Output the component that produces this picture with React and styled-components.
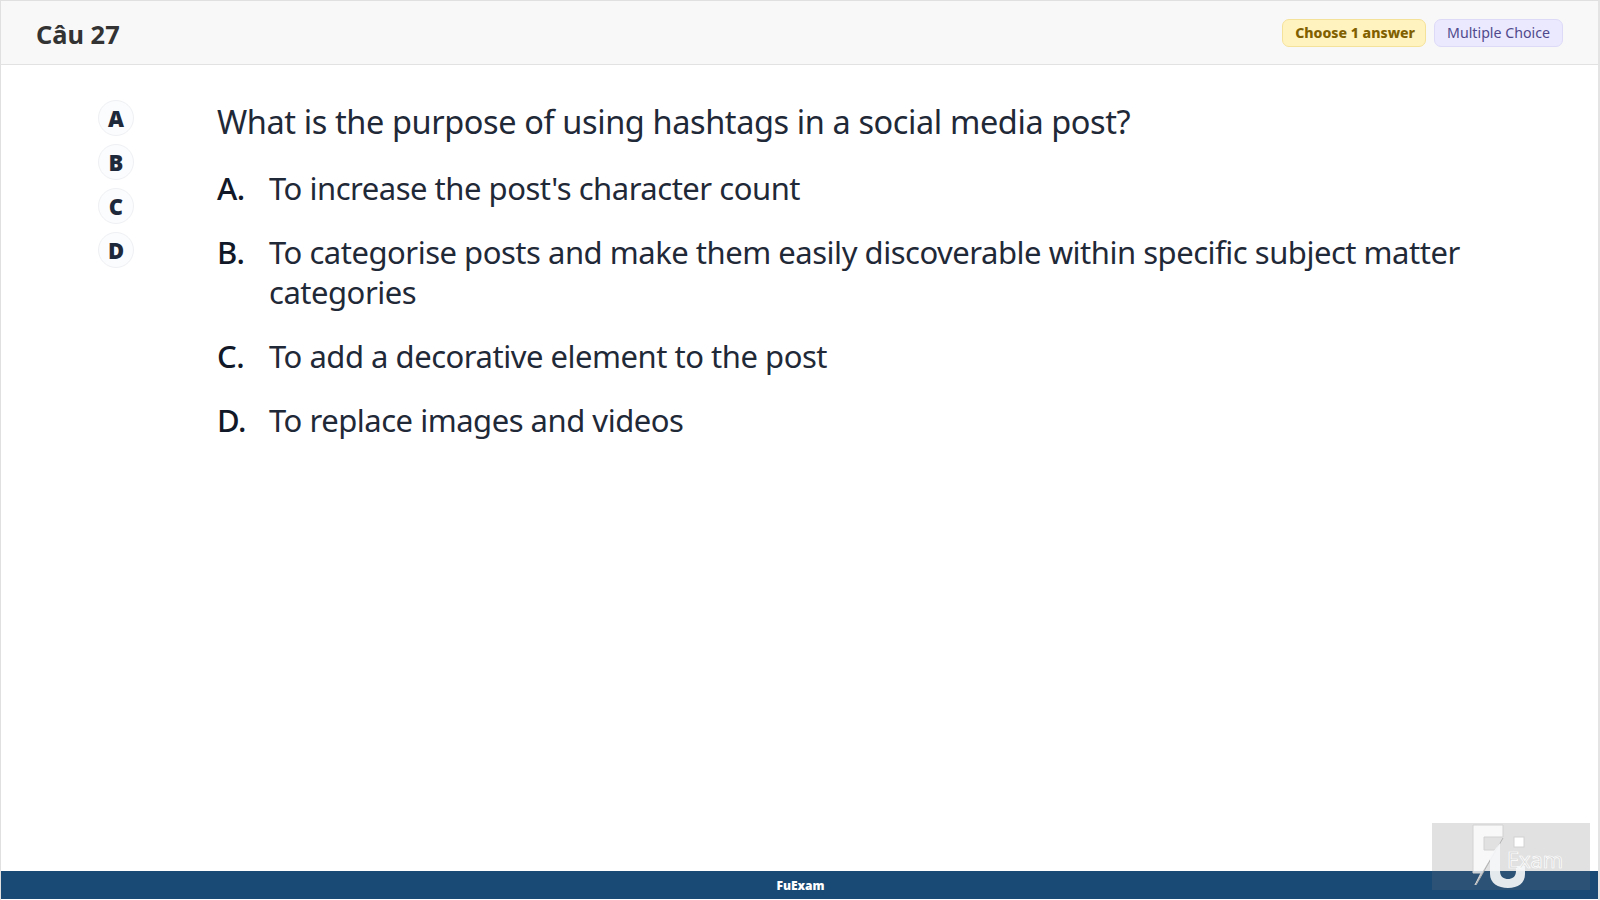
import React from 'react';
import styled, { createGlobalStyle } from 'styled-components';

const GlobalStyle = createGlobalStyle`
  html, body {
    margin: 0;
    height: 100%;
    background: #ffffff;
  }
  #root {
    height: 100%;
  }
`;

const Page = styled.div`
  position: relative;
  box-sizing: border-box;
  width: 1600px;
  height: 900px;
  display: flex;
  flex-direction: column;
  border-left: 1px solid #e0e0e0;
  border-right: 2px solid #e4e4e4;
  border-top: 1px solid #e0e0e0;
  padding-bottom: 1px;
  font-family: "Noto Sans", sans-serif;
  color: #1f2937;
`;

const Header = styled.header`
  box-sizing: border-box;
  height: 64px;
  flex: none;
  display: flex;
  align-items: center;
  justify-content: space-between;
  padding: 0 35px;
  background: #f8f8f8;
  border-bottom: 1px solid #e2e2e2;
`;

const Title = styled.h1`
  margin: 0 0 -2px;
  font-size: 25.4px;
  font-weight: 700;
  color: #333333;
`;

const Badges = styled.div`
  display: flex;
  gap: 8px;
`;

const Badge = styled.span`
  box-sizing: border-box;
  height: 28px;
  display: flex;
  align-items: center;
  padding: 0 ${p => (p.$strong ? '10px 0 12px' : '12px')};
  border-radius: 7px;
  font-size: ${p => (p.$strong ? '14.1px' : '14.2px')};
  font-weight: ${p => (p.$strong ? 800 : 400)};
  color: ${p => p.$text};
  background: ${p => p.$bg};
  border: 1px solid ${p => p.$line};
`;

const Main = styled.main`
  flex: 1;
  display: flex;
  padding-top: 35px;
`;

const Picker = styled.div`
  width: 216px;
  flex: none;
  box-sizing: border-box;
  padding-left: 97px;
  display: flex;
  flex-direction: column;
  gap: 8px;
`;

const Circle = styled.div`
  box-sizing: border-box;
  width: 36px;
  height: 36px;
  display: flex;
  align-items: center;
  justify-content: center;
  border-radius: 50%;
  background: #fbfcfd;
  border: 1px solid #eef0f3;
  font-size: 22px;
  font-weight: 900;
  color: #1e293b;
`;

const Content = styled.div`
  width: 1260px;
  margin-top: -1px;
`;

const Question = styled.p`
  margin: 0 0 23px;
  font-size: 32.5px;
  letter-spacing: -0.4px;
  line-height: 46px;
  color: #1f2937;
`;

const OptionRow = styled.div`
  display: flex;
  margin-bottom: 24px;
  font-size: 31px;
  letter-spacing: -0.48px;
  line-height: 40px;
`;

const OptionKey = styled.span`
  width: 52px;
  flex: none;
  font-weight: 500;
  color: #111827;
`;

const OptionText = styled.span`
  color: #1f2937;
`;

const Footer = styled.footer`
  height: 28px;
  flex: none;
  display: flex;
  align-items: center;
  justify-content: center;
  box-sizing: border-box;
  padding-left: 2px;
  background: #184a75;
  color: #ffffff;
  font-size: 12px;
  font-weight: 900;
`;

const Watermark = styled.div`
  position: absolute;
  left: 1431px;
  top: 822px;
  width: 158px;
  height: 67px;
  background: rgba(120, 120, 120, 0.22);
`;

const LogoSvg = styled.svg`
  display: block;
  width: 158px;
  height: 67px;
`;

const letters = ['A', 'B', 'C', 'D'];

const options = [
  { key: 'A.', text: "To increase the post's character count" },
  { key: 'B.', text: 'To categorise posts and make them easily discoverable within specific subject matter categories' },
  { key: 'C.', text: 'To add a decorative element to the post' },
  { key: 'D.', text: 'To replace images and videos' },
];

const Logo = () => (
  <LogoSvg viewBox="0 0 158 67">
    <path d="M41 2H71V14H52V27H64L43 62L49 50H41Z" fill="#ffffff" fillOpacity="0.75" stroke="#d2d2d2" />
    <path d="M71 15L44 62" stroke="#b4b4b4" strokeWidth="1" />
    <path d="M58 33L68 20V48c0 6 4 8 8 8s8-2 8-8v-5h9v8c0 9-7 14-17 14s-18-5-18-14Z" fill="#f4f6f8" fillOpacity="0.92" />
    <rect x="82" y="14" width="10" height="10" fill="#ffffff" stroke="#d2d2d2" />
    <text x="75" y="45" fontFamily="Noto Sans, sans-serif" fontSize="21" fill="#d6d6d6" stroke="#ffffff" strokeWidth="0.7" textLength="56" lengthAdjust="spacingAndGlyphs">
      Exam
    </text>
  </LogoSvg>
);

export default function App() {
  return (
    <Page>
      <GlobalStyle />
      <Header>
        <Title>Câu 27</Title>
        <Badges>
          <Badge $strong $bg="#fff3bf" $line="#f5e29a" $text="#806000">Choose 1 answer</Badge>
          <Badge $bg="#ebe9fe" $line="#dddaf8" $text="#50498c">Multiple Choice</Badge>
        </Badges>
      </Header>
      <Main>
        <Picker>
          {letters.map(l => <Circle key={l}>{l}</Circle>)}
        </Picker>
        <Content>
          <Question>What is the purpose of using hashtags in a social media post?</Question>
          {options.map(o => (
            <OptionRow key={o.key}>
              <OptionKey>{o.key}</OptionKey>
              <OptionText>{o.text}</OptionText>
            </OptionRow>
          ))}
        </Content>
      </Main>
      <Footer>FuExam</Footer>
      <Watermark><Logo /></Watermark>
    </Page>
  );
}
